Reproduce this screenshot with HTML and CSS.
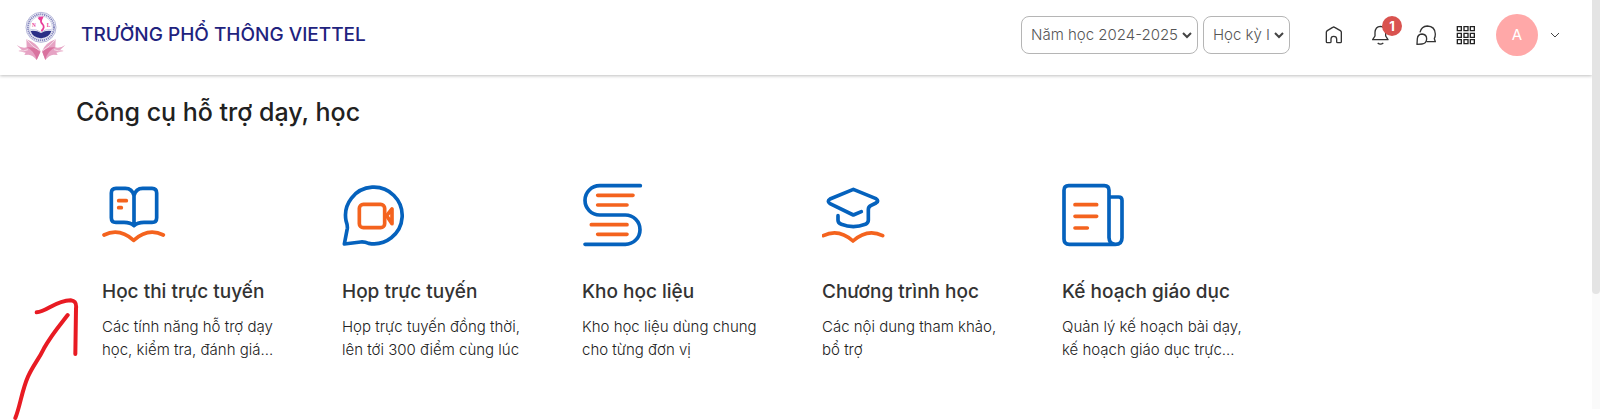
FILE: index.html
```
<!DOCTYPE html>
<html lang="vi">
<head>
    <meta charset="UTF-8">
    <meta name="viewport" content="width=device-width, initial-scale=1.0">
    <title>Trường Phổ Thông Viettel</title>
    <link rel="stylesheet" href="styles.css">
</head>
<body>
    <div class="page">
        <div class="content">
            <header class="header">
                <a class="brand" href="#">
                    <svg class="logo" viewBox="0 0 180 180" fill="none" aria-hidden="true">
                        <circle cx="93" cy="67" r="45" fill="#fff" stroke="#8d8fc4" stroke-width="2"/>
                        <circle cx="93" cy="67" r="39" stroke="#8587bf" stroke-width="6" stroke-dasharray="4 2"/>
                        <circle cx="93" cy="67" r="34" fill="#fff" stroke="#b9bbdc" stroke-width="2"/>
                        <path d="M62 78Q80 76 93 84Q106 76 124 78Q118 98 93 100Q68 98 62 78Z" fill="#2b2f86"/>
                        <path d="M62 74Q80 72 93 82Q106 72 124 74" stroke="#9da0cf" stroke-width="2"/>
                        <path d="M86 38L97 37L94 44Q90 50 98 58Q106 68 94 78" stroke="#e83e98" stroke-width="5"/>
                        <path d="M83 38L98 36L95 46H88Z" fill="#e83e98"/>
                        <text class="logo-letter" x="66" y="65">N</text>
                        <text class="logo-letter" x="110" y="65">L</text>
                        <path d="M20 120Q38 132 50 127L49 103Q80 113 92 139L80 165Q69 150 55 149L43 150L47 143L25 138L35 134Z" fill="#e6a3c4"/>
                        <path d="M166 120Q148 132 136 127L137 103Q106 113 96 139L106 165Q117 150 131 149L143 150L139 143L161 138L151 134Z" fill="#e6a3c4"/>
                        <path d="M50 127Q78 124 91 141L80 165Q73 137 50 127ZM136 127Q110 124 97 141L106 165Q113 137 136 127Z" fill="#d9739f"/>
                        <path d="M49 103Q70 128 88 136M137 103Q116 128 99 136M27 138Q42 139 54 134M159 138Q144 139 132 134" stroke="#f6dce8" stroke-width="3"/>
                    </svg>
                    <span class="brand-name">TRƯỜNG PHỔ THÔNG VIETTEL</span>
                </a>
                <div class="filters">
                    <select class="filter" aria-label="Năm học">
                        <option>Năm học 2024-2025</option>
                    </select>
                    <select class="filter" aria-label="Học kỳ">
                        <option>Học kỳ I</option>
                    </select>
                </div>
                <nav class="tools">
                    <a class="tool wide" href="#" aria-label="Trang chủ">
                        <svg class="tool-icon" viewBox="71 70 60 60">
                            <path d="M78 92Q78 89 81 87L97 77Q100 75 103 77L120 87Q123 89 123 92V120Q123 123 120 123H112Q109 123 109 120V112Q109 104 100 104Q92 104 92 112V120Q92 123 89 123H81Q78 123 78 120Z"/>
                        </svg>
                    </a>
                    <button class="tool wide" type="button" aria-label="Thông báo">
                        <svg class="tool-icon" viewBox="210 70 60 60">
                            <path d="M218 114L225 103V92Q226 75 241 74Q256 75 257 92V103L264 114ZM233 124Q241 131 250 124"/>
                        </svg>
                        <span class="badge">1</span>
                    </button>
                    <button class="tool" type="button" aria-label="Tin nhắn">
                        <svg class="tool-icon" viewBox="352 70 60 60">
                            <path d="M364 92Q368 74 386 73Q409 74 410 97Q410 106 407 111L410 120H384M355 128L356 111Q357 98 370 97Q384 98 384 112Q383 126 370 127Z"/>
                        </svg>
                    </button>
                    <button class="tool" type="button" aria-label="Ứng dụng">
                        <svg class="tool-icon grid-icon" viewBox="471 70 60 60">
                            <path d="M475 75h12v12h-12zM495 75h12v12h-12zM514 75h12v12h-12zM475 95h12v12h-12zM495 95h12v12h-12zM514 95h12v12h-12zM475 114h12v12h-12zM495 114h12v12h-12zM514 114h12v12h-12z"/>
                        </svg>
                    </button>
                    <button class="account" type="button" aria-label="Tài khoản">
                        <span class="avatar">A</span>
                        <svg class="caret" viewBox="0 0 12 12"><path d="M2 4L6 8L10 4"/></svg>
                    </button>
                </nav>
            </header>

            <main class="main">
                <h1 class="heading">Công cụ hỗ trợ dạy, học</h1>
                <div class="cards">
                    <a class="card" href="#">
                        <svg class="card-icon" viewBox="0 0 192 192">
                            <path class="blue" d="M96 38C92 22 84 16 70 16H42Q28 16 28 30V104Q28 118 42 118H66C80 118 90 122 96 128C102 122 112 118 126 118H150Q164 118 164 104V30Q164 16 150 16H122C108 16 100 22 96 38V126"/>
                            <path class="orange" d="M50 53H73M50 74H58M6 156C34 142 66 146 95 172C124 146 156 142 184 156"/>
                        </svg>
                        <h2 class="card-title">Học thi trực tuyến</h2>
                        <p class="card-text">Các tính năng hỗ trợ dạy học, kiểm tra, đánh giá...</p>
                    </a>
                    <a class="card" href="#">
                        <svg class="card-icon" viewBox="0 0 192 192">
                            <path class="blue" d="M12 113A85 85 0 1 1 80 181Q68 176 56 177L7 183L16 136Q17 128 12 113Z"/>
                            <rect class="orange" x="52" y="64" width="76" height="70" rx="12"/>
                            <path class="orange" d="M134 98L150 78V122Z"/>
                        </svg>
                        <h2 class="card-title">Họp trực tuyến</h2>
                        <p class="card-text">Họp trực tuyến đồng thời, lên tới 300 điểm cùng lúc</p>
                    </a>
                    <a class="card" href="#">
                        <svg class="card-icon" viewBox="0 0 192 192">
                            <path class="blue" d="M175 8H53A44 44 0 0 0 53 96H130A44 44 0 0 1 130 184H9"/>
                            <path class="orange" d="M47 37H153M47 66H135M28 125H135M47 154H135"/>
                        </svg>
                        <h2 class="card-title">Kho học liệu</h2>
                        <p class="card-text">Kho học liệu dùng chung cho từng đơn vị</p>
                    </a>
                    <a class="card" href="#">
                        <svg class="card-icon" viewBox="0 0 192 192">
                            <path class="blue" d="M118 86L94 96L24 62Q14 54 24 48L94 19L162 47Q172 54 162 60L146 68Q139 72 139 80V112Q139 120 130 124Q94 138 58 124Q48 120 48 112V98"/>
                            <path class="orange" d="M4 158C32 144 64 148 93 174C122 148 154 144 182 158"/>
                        </svg>
                        <h2 class="card-title">Chương trình học</h2>
                        <p class="card-text">Các nội dung tham khảo, bổ trợ</p>
                    </a>
                    <a class="card" href="#">
                        <svg class="card-icon" viewBox="0 0 192 192">
                            <path class="blue" d="M141 164V22Q141 8 127 8H20Q6 8 6 22V168Q6 184 22 184H160Q180 184 180 164V52Q180 42 170 42H141M141 164Q142 184 160 184"/>
                            <path class="orange" d="M39 65H104M39 100H104M39 135H76"/>
                        </svg>
                        <h2 class="card-title">Kế hoạch giáo dục</h2>
                        <p class="card-text">Quản lý kế hoạch bài dạy, kế hoạch giáo dục trực...</p>
                    </a>
                </div>
            </main>
        </div>
        <div class="scrollbar"><div class="thumb"></div></div>
        <svg class="pointer" viewBox="0 0 360 420" aria-hidden="true">
            <path d="M46 414C60 380 66 330 84 290C100 255 115 240 132 205C155 163 180 135 203 105M110 97C140 96 165 62 212 61C226 63 230 70 228 86L226 222"/>
        </svg>
    </div>
</body>
</html>
```
FILE: styles.css
```
* { box-sizing: border-box; }
body { margin: 0; font-family: Inter, sans-serif; background: #fff; color: #212121; overflow: hidden; }
a { color: inherit; text-decoration: none; }
button { padding: 0; border: 0; background: none; font-family: inherit; cursor: pointer; }

.page { position: relative; display: flex; height: 100vh; }
.content { flex: 1; }

/* header */
.header { display: flex; align-items: center; height: 75px; padding: 0 31px 6px 10px; background: #fff; box-shadow: 0 1px 3px rgba(0, 0, 0, 0.25); }
.brand { display: flex; align-items: center; gap: 11px; margin-right: auto; }
.logo { width: 60px; height: 60px; }
.logo-letter { font: bold 16px "Liberation Serif", serif; fill: #e83e98; }
.brand-name { font-size: 19px; font-weight: 500; color: #1f237e; }
.filters { display: flex; gap: 5px; margin-right: 34px; }
.filter { height: 38px; padding: 0 18px 0 9px; border: 1px solid #b5b5b5; border-radius: 8px; background: #fff url("data:image/svg+xml,%3Csvg xmlns='http://www.w3.org/2000/svg' width='10' height='8' fill='none' stroke='%23444' stroke-width='2'%3E%3Cpath d='M1 2L5 6L9 2'/%3E%3C/svg%3E") no-repeat right 5px center; color: #555; font-family: inherit; font-size: 15px; font-weight: 300; appearance: none; }
.tools { display: flex; align-items: center; gap: 20px; }
.tool { position: relative; display: flex; }
.wide { margin-right: 6px; }
.tool-icon { width: 20px; height: 20px; fill: none; stroke: #333; stroke-width: 4; stroke-linejoin: round; }
.grid-icon { stroke: #222; stroke-linejoin: miter; }
.badge { position: absolute; top: -9px; left: 12px; width: 20px; height: 20px; border-radius: 10px; background: #d9534f; color: #fff; font-size: 13px; font-weight: 700; line-height: 20px; text-align: center; }
.account { display: flex; align-items: center; gap: 11px; }
.avatar { width: 42px; height: 42px; border-radius: 50%; background: #ffa8a8; color: #fff; font-size: 15px; line-height: 42px; text-align: center; }
.caret { width: 12px; height: 12px; fill: none; stroke: #444; }

/* tool cards */
.main { padding: 20px 76px; }
.heading { margin: 0 0 54px; font-size: 25px; font-weight: 500; line-height: 34px; }
.cards { display: flex; }
.card { width: 240px; padding: 0 32px 0 26px; }
.card-icon { display: block; width: 64px; height: 64px; margin-bottom: 32px; fill: none; stroke-width: 11; stroke-linecap: round; stroke-linejoin: round; }
.blue { stroke: #0562bd; }
.orange { stroke: #f4631e; }
.card-title { margin: 0 0 10px; font-size: 19px; font-weight: 500; line-height: 26px; color: #333; white-space: nowrap; }
.card-text { margin: 0; font-size: 15px; font-weight: 300; line-height: 23px; color: #222; }

.scrollbar { width: 8px; margin-bottom: 11px; background: #fafafa; }
.thumb { height: 72%; border-radius: 0 0 4px 4px; background: #e4e4e4; }

/* hand-drawn arrow over the page */
.pointer { position: absolute; left: 0; bottom: 0; width: 120px; height: 140px; fill: none; stroke: #e81b23; stroke-width: 12; stroke-linecap: round; stroke-linejoin: round; pointer-events: none; }
```
